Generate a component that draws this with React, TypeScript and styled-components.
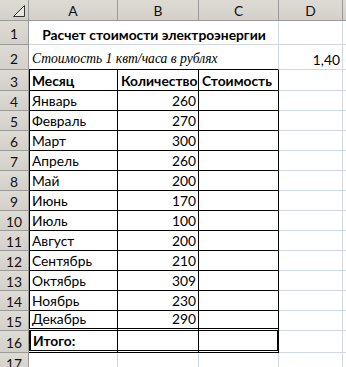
import React from 'react';
import styled, { createGlobalStyle, css } from 'styled-components';

const GRID = '#d0d7e5';
const HEAD_LINE = '#9a9a9a';

const GlobalStyle = createGlobalStyle`
  html, body {
    margin: 0;
    padding: 0;
    background: #fff;
    overflow: hidden;
  }
`;

const Sheet = styled.div`
  display: grid;
  grid-template-columns: 29px 89px 81px 80px 64px 1fr;
  grid-template-rows: 21px 24px 25px 21px repeat(12, 20px) 22px 1fr;
  width: 346px;
  height: 367px;
  overflow: hidden;
  font-family: Lato, Carlito, 'Open Sans', sans-serif;
  font-size: 13.8px;
  color: #000;
`;

const HeadBase = styled.div`
  box-sizing: border-box;
  background: linear-gradient(#dedbd5, #d3d0c9);
  border-right: 1px solid ${HEAD_LINE};
  border-bottom: 1px solid ${HEAD_LINE};
  display: flex;
  align-items: center;
  justify-content: center;
  color: #111;
`;

const Corner = styled(HeadBase)`
  align-items: flex-end;
  justify-content: flex-end;
  padding: 0 3px 3px 0;
`;

const ColHead = styled(HeadBase)`
  padding-top: 1px;
`;

const RowHead = styled(HeadBase)`
  padding-top: 2px;
  align-items: ${(p: { $top?: boolean }) => (p.$top ? 'flex-start' : 'center')};
`;

type Edge = 'grid' | 'none' | 'thin' | 'medium' | 'double';

const edge = (e: Edge) => {
  switch (e) {
    case 'none':
      return '0 none';
    case 'thin':
      return '1px solid #000';
    case 'medium':
      return '2px solid #000';
    case 'double':
      return '3px double #000';
    default:
      return `1px solid ${GRID}`;
  }
};

interface CellProps {
  $align?: 'left' | 'right' | 'center';
  $bold?: boolean;
  $italic?: boolean;
  $span?: number;
  $r?: Edge;
  $b?: Edge;
  $l?: 0 | 1 | 2;
}

const Cell = styled.div<CellProps>`
  box-sizing: border-box;
  display: flex;
  align-items: flex-end;
  justify-content: ${(p) =>
    p.$align === 'right' ? 'flex-end' : p.$align === 'center' ? 'center' : 'flex-start'};
  padding: 0 2px 1px ${(p) => (p.$l ? 2 + p.$l : 3)}px;
  white-space: nowrap;
  overflow: visible;
  border-right: ${(p) => edge(p.$r || 'grid')};
  border-bottom: ${(p) => edge(p.$b || 'grid')};
  font-weight: ${(p) => (p.$bold ? 700 : 400)};
  ${(p) => p.$span && css`grid-column: span ${p.$span};`}
  ${(p) => p.$l && css`box-shadow: inset ${p.$l}px 0 0 #000;`}
  ${(p) =>
    p.$italic &&
    css`
      font-family: 'Liberation Serif', 'Times New Roman', serif;
      font-style: italic;
      font-size: 13.6px;
      padding-bottom: 2px;
    `}
`;

const months: [string, number][] = [
  ['Январь', 260],
  ['Февраль', 270],
  ['Март', 300],
  ['Апрель', 260],
  ['Май', 200],
  ['Июнь', 170],
  ['Июль', 100],
  ['Август', 200],
  ['Сентябрь', 210],
  ['Октябрь', 309],
  ['Ноябрь', 230],
  ['Декабрь', 290],
];

function CornerMark() {
  return (
    <svg width="12" height="12" viewBox="0 0 12 12">
      <polygon points="0.5,11.5 11.5,0.5 11.5,11.5" fill="#e8e6e1" stroke="#333" strokeWidth="1" />
    </svg>
  );
}

export default function App() {
  return (
    <>
      <GlobalStyle />
      <Sheet>
        <Corner>
          <CornerMark />
        </Corner>
        {['A', 'B', 'C', 'D', ''].map((c, i) => (
          <ColHead key={i}>{c}</ColHead>
        ))}

        <RowHead>1</RowHead>
        <Cell $span={3} $align="center" $bold>
          Расчет стоимости электроэнергии
        </Cell>
        <Cell />
        <Cell />

        <RowHead>2</RowHead>
        <Cell $span={3} $italic $b="thin">
          Стоимость 1 квт/часа в рублях
        </Cell>
        <Cell $align="right">1,40</Cell>
        <Cell />

        <RowHead>3</RowHead>
        <Cell $bold $r="thin" $b="thin" $l={1}>
          Месяц
        </Cell>
        <Cell $bold $r="thin" $b="thin">
          Количество
        </Cell>
        <Cell $bold $r="thin" $b="thin">
          Стоимость
        </Cell>
        <Cell />
        <Cell />

        {months.map(([name, kwh], i) => {
          const last = i === months.length - 1;
          const b: Edge = last ? 'double' : 'thin';
          return (
            <React.Fragment key={name}>
              <RowHead>{i + 4}</RowHead>
              <Cell $r="thin" $b={b} $l={1}>
                {name}
              </Cell>
              <Cell $align="right" $r="thin" $b={b}>
                {kwh}
              </Cell>
              <Cell $r="thin" $b={b} />
              <Cell />
              <Cell />
            </React.Fragment>
          );
        })}

        <RowHead>16</RowHead>
        <Cell $bold $r="thin" $b="double" $l={2}>
          Итого:
        </Cell>
        <Cell $r="thin" $b="double" />
        <Cell $r="medium" $b="double" />
        <Cell />
        <Cell />

        <RowHead $top>17</RowHead>
        <Cell />
        <Cell />
        <Cell />
        <Cell />
        <Cell />
      </Sheet>
    </>
  );
}
